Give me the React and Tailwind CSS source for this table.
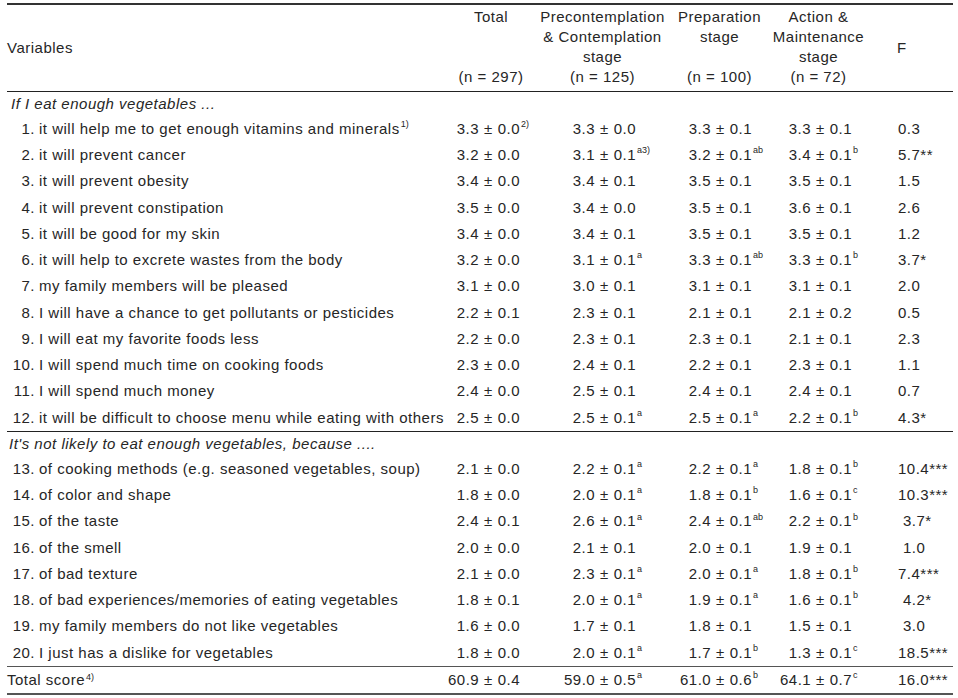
import React from "react";

const s1 = [
  ["1.", "it will help me to get enough vitamins and minerals", "1)", ["3.3", "0.0", "2)"], ["3.3", "0.0", ""], ["3.3", "0.1", ""], ["3.3", "0.1", ""], "0.3", 0],
  ["2.", "it will prevent cancer", "", ["3.2", "0.0", ""], ["3.1", "0.1", "a3)"], ["3.2", "0.1", "ab"], ["3.4", "0.1", "b"], "5.7**", 0],
  ["3.", "it will prevent obesity", "", ["3.4", "0.0", ""], ["3.4", "0.1", ""], ["3.5", "0.1", ""], ["3.5", "0.1", ""], "1.5", 0],
  ["4.", "it will prevent constipation", "", ["3.5", "0.0", ""], ["3.4", "0.0", ""], ["3.5", "0.1", ""], ["3.6", "0.1", ""], "2.6", 0],
  ["5.", "it will be good for my skin", "", ["3.4", "0.0", ""], ["3.4", "0.1", ""], ["3.5", "0.1", ""], ["3.5", "0.1", ""], "1.2", 0],
  ["6.", "it will help to excrete wastes from the body", "", ["3.2", "0.0", ""], ["3.1", "0.1", "a"], ["3.3", "0.1", "ab"], ["3.3", "0.1", "b"], "3.7*", 0],
  ["7.", "my family members will be pleased", "", ["3.1", "0.0", ""], ["3.0", "0.1", ""], ["3.1", "0.1", ""], ["3.1", "0.1", ""], "2.0", 0],
  ["8.", "I will have a chance to get pollutants or pesticides", "", ["2.2", "0.1", ""], ["2.3", "0.1", ""], ["2.1", "0.1", ""], ["2.1", "0.2", ""], "0.5", 0],
  ["9.", "I will eat my favorite foods less", "", ["2.2", "0.0", ""], ["2.3", "0.1", ""], ["2.3", "0.1", ""], ["2.1", "0.1", ""], "2.3", 0],
  ["10.", "I will spend much time on cooking foods", "", ["2.3", "0.0", ""], ["2.4", "0.1", ""], ["2.2", "0.1", ""], ["2.3", "0.1", ""], "1.1", 0],
  ["11.", "I will spend much money", "", ["2.4", "0.0", ""], ["2.5", "0.1", ""], ["2.4", "0.1", ""], ["2.4", "0.1", ""], "0.7", 0],
  ["12.", "it will be difficult to choose menu while eating with others", "", ["2.5", "0.0", ""], ["2.5", "0.1", "a"], ["2.5", "0.1", "a"], ["2.2", "0.1", "b"], "4.3*", 0],
];

const s2 = [
  ["13.", "of cooking methods (e.g. seasoned vegetables, soup)", "", ["2.1", "0.0", ""], ["2.2", "0.1", "a"], ["2.2", "0.1", "a"], ["1.8", "0.1", "b"], "10.4***", 0],
  ["14.", "of color and shape", "", ["1.8", "0.0", ""], ["2.0", "0.1", "a"], ["1.8", "0.1", "b"], ["1.6", "0.1", "c"], "10.3***", 0],
  ["15.", "of the taste", "", ["2.4", "0.1", ""], ["2.6", "0.1", "a"], ["2.4", "0.1", "ab"], ["2.2", "0.1", "b"], "3.7*", 1],
  ["16.", "of the smell", "", ["2.0", "0.0", ""], ["2.1", "0.1", ""], ["2.0", "0.1", ""], ["1.9", "0.1", ""], "1.0", 1],
  ["17.", "of bad texture", "", ["2.1", "0.0", ""], ["2.3", "0.1", "a"], ["2.0", "0.1", "a"], ["1.8", "0.1", "b"], "7.4***", 0],
  ["18.", "of bad experiences/memories of eating vegetables", "", ["1.8", "0.1", ""], ["2.0", "0.1", "a"], ["1.9", "0.1", "a"], ["1.6", "0.1", "b"], "4.2*", 1],
  ["19.", "my family members do not like vegetables", "", ["1.6", "0.0", ""], ["1.7", "0.1", ""], ["1.8", "0.1", ""], ["1.5", "0.1", ""], "3.0", 1],
  ["20.", "I just has a dislike for vegetables", "", ["1.8", "0.0", ""], ["2.0", "0.1", "a"], ["1.7", "0.1", "b"], ["1.3", "0.1", "c"], "18.5***", 0],
];

const GRID = "grid grid-cols-[438px_92px_135px_95px_103px_83px]";

function Sup({ children }) {
  if (!children) return null;
  return <sup className="text-[9px] ml-[1px] -top-[5px] tracking-normal">{children}</sup>;
}

function Val({ v, pad }) {
  return (
    <div className={"flex items-center whitespace-nowrap " + pad}>
      <span className="inline-block w-[31px] text-right">{v[0]}</span>
      <span className="mx-[5px]">±</span>
      <span>{v[1]}</span>
      <Sup>{v[2]}</Sup>
    </div>
  );
}

function Row({ r }) {
  return (
    <div className={GRID + " items-center h-[26.25px]"}>
      <div className="flex items-center whitespace-nowrap pl-[4px]">
        <span className="inline-block w-[24px] text-right">{r[0]}</span>
        <span className="ml-[4px]">{r[1]}</span>
        <Sup>{r[2]}</Sup>
      </div>
      <Val v={r[3]} pad="pl-[3px]" />
      <Val v={r[4]} pad="pl-[27px]" />
      <Val v={r[5]} pad="pl-[8px]" />
      <Val v={r[6]} pad="pl-[13px]" />
      <div className={"whitespace-nowrap " + (r[8] ? "pl-[33px]" : "pl-[28px]")}>{r[7]}</div>
    </div>
  );
}

export default function App() {
  return (
    <div
      className="w-[958px] h-[698px] bg-white text-[#262626] text-[15px] tracking-[0.5px] overflow-hidden pt-[3px] pl-[7px]"
      style={{ fontFamily: '"Liberation Sans", Arial, sans-serif' }}
    >
      <div className="w-[946px]">
        <div className="h-[2px] bg-[#333]" />
        <div className={GRID + " h-[86px] leading-[20px]"}>
          <div className="flex items-center">Variables</div>
          <div className="flex flex-col items-center pt-[2px]">
            <span>Total</span>
            <span>&nbsp;</span>
            <span>&nbsp;</span>
            <span>(n = 297)</span>
          </div>
          <div className="flex flex-col items-center pt-[2px] pr-[4px]">
            <span>Precontemplation</span>
            <span>&amp; Contemplation</span>
            <span>stage</span>
            <span>(n = 125)</span>
          </div>
          <div className="flex flex-col items-center pt-[2px]">
            <span>Preparation</span>
            <span>stage</span>
            <span>&nbsp;</span>
            <span>(n = 100)</span>
          </div>
          <div className="flex flex-col items-center pt-[2px]">
            <span>Action &amp;</span>
            <span>Maintenance</span>
            <span>stage</span>
            <span>(n = 72)</span>
          </div>
          <div className="flex items-center pl-[27px]">F</div>
        </div>
        <div className="h-[1px] bg-[#222]" />

        <div className="h-[24px] flex items-center pl-[4px] italic">If I eat enough vegetables ...</div>
        {s1.map((r, i) => (
          <Row key={i} r={r} />
        ))}
        <div className="h-[1px] bg-[#222]" />
        <div className="h-[24px] flex items-center pl-[2px] italic">It's not likely to eat enough vegetables, because ....</div>
        {s2.map((r, i) => (
          <Row key={i} r={r} />
        ))}
        <div className="h-[1px] bg-[#555]" />
        <div className={GRID + " items-center h-[26px]"}>
          <div className="whitespace-nowrap">
            Total score<Sup>4)</Sup>
          </div>
          <Val v={["60.9", "0.4", ""]} pad="pl-[3px]" />
          <Val v={["59.0", "0.5", "a"]} pad="pl-[27px]" />
          <Val v={["61.0", "0.6", "b"]} pad="pl-[8px]" />
          <Val v={["64.1", "0.7", "c"]} pad="pl-[13px]" />
          <div className="pl-[28px]">16.0***</div>
        </div>
        <div className="h-[2px] bg-[#555]" />
      </div>
    </div>
  );
}
